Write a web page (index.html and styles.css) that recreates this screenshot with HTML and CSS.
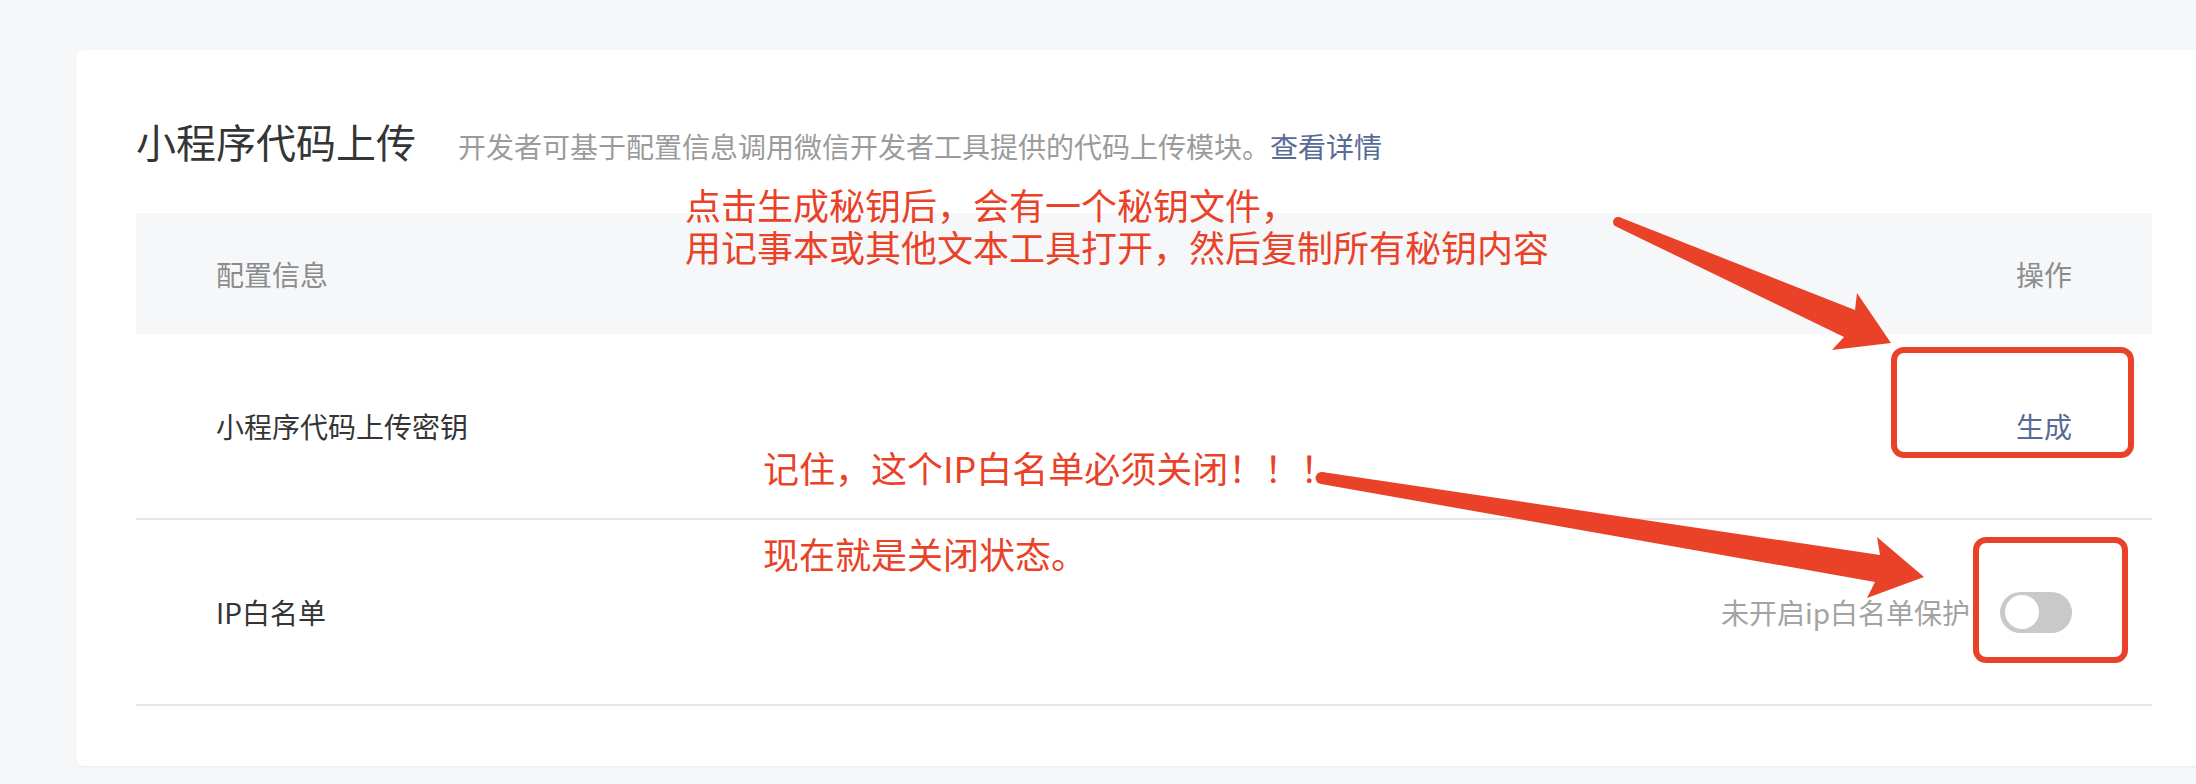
FILE: index.html
```html
<!DOCTYPE html>
<html lang="zh-CN">
<head>
<meta charset="utf-8">
<title>小程序代码上传</title>
<link rel="stylesheet" href="styles.css">
</head>
<body>
<div class="page">
  <section class="card">
    <div class="card-head">
      <h2 class="title">小程序代码上传</h2>
      <p class="desc">开发者可基于配置信息调用微信开发者工具提供的代码上传模块。<a class="link" href="#">查看详情</a></p>
    </div>
    <div class="table">
      <div class="row head">
        <div class="cell">配置信息</div>
        <div class="cell right">操作</div>
      </div>
      <div class="row">
        <div class="cell">小程序代码上传密钥</div>
        <div class="cell right"><a class="link" href="#">生成</a></div>
      </div>
      <div class="row">
        <div class="cell">IP白名单</div>
        <div class="cell right"><span class="hint">未开启ip白名单保护</span><span class="switch"><span class="knob"></span></span></div>
      </div>
    </div>
  </section>
</div>

<div class="notes">
  <svg class="marks" width="2196" height="784" viewBox="0 0 2196 784" xmlns="http://www.w3.org/2000/svg">
    <g fill="#e94228">
      <polygon points="1619,217 1855,310 1857,293 1891,343 1832,350 1844,337 1617,227"/>
      <circle cx="1618" cy="222" r="5"/>
      <polygon points="1322,472 1880,555 1877,537 1924,577 1867,598 1875,582 1321,484"/>
      <circle cx="1321.5" cy="478" r="6"/>
    </g>
    <g fill="none" stroke="#e94228" stroke-width="6">
      <rect x="1894" y="350" width="237" height="105" rx="10"/>
      <rect x="1976" y="540" width="149" height="120" rx="10"/>
    </g>
  </svg>
  <div class="note note-1">点击生成秘钥后，会有一个秘钥文件，<br>用记事本或其他文本工具打开，然后复制所有秘钥内容</div>
  <div class="note note-2">记住，这个IP白名单必须关闭！！！</div>
  <div class="note note-3">现在就是关闭状态。</div>
</div>
</body>
</html>
```

FILE: styles.css
```css
html, body {
  margin: 0;
  height: 100%;
  overflow: hidden;
}

body {
  position: relative;
  background: #f6f7f9;
  font-family: "Noto Sans CJK SC", "Noto Sans", sans-serif;
}

.page {
  padding: 50px 0 0 76px;
}

.card {
  background: #fff;
  border-radius: 8px;
  margin-right: -16px;
  padding: 71px 60px 60px;
  box-shadow: 0 1px 3px rgba(0, 0, 0, 0.06);
}

.card-head {
  display: flex;
  align-items: baseline;
}

.title {
  margin: 0;
  font-size: 40px;
  line-height: 40px;
  font-weight: 400;
  color: #353535;
}

.desc {
  margin: 0 0 0 42px;
  font-size: 28px;
  line-height: 40px;
  color: #9b9b9b;
}

.link {
  color: #576b95;
  text-decoration: none;
}

.table {
  margin-top: 47px;
}

.row {
  display: flex;
  justify-content: space-between;
  align-items: center;
  height: 184px;
  padding: 0 80px;
  border-bottom: 2px solid #e7e7eb;
  font-size: 28px;
  color: #353535;
}

.row.head {
  height: 121px;
  background: #f6f7f9;
  border-bottom: none;
  color: #8c8c8c;
}

.cell.right {
  display: flex;
  align-items: center;
}

.hint {
  color: #a3a3a3;
}

.switch {
  display: flex;
  align-items: center;
  box-sizing: border-box;
  width: 72px;
  height: 41px;
  margin-left: 30px;
  padding-left: 5px;
  border-radius: 21px;
  background: #c9c9c9;
}

.knob {
  width: 34px;
  height: 34px;
  border-radius: 50%;
  background: #fff;
}

.notes {
  position: absolute;
  left: 0;
  top: 0;
  width: 2196px;
  height: 784px;
  pointer-events: none;
}

.marks {
  position: absolute;
  left: 0;
  top: 0;
}

.note {
  position: absolute;
  font-size: 36px;
  line-height: 42px;
  color: #e94228;
  white-space: nowrap;
}

.note-1 {
  left: 685px;
  top: 183px;
}

.note-2 {
  left: 763px;
  top: 446px;
}

.note-3 {
  left: 763px;
  top: 532px;
}
```
